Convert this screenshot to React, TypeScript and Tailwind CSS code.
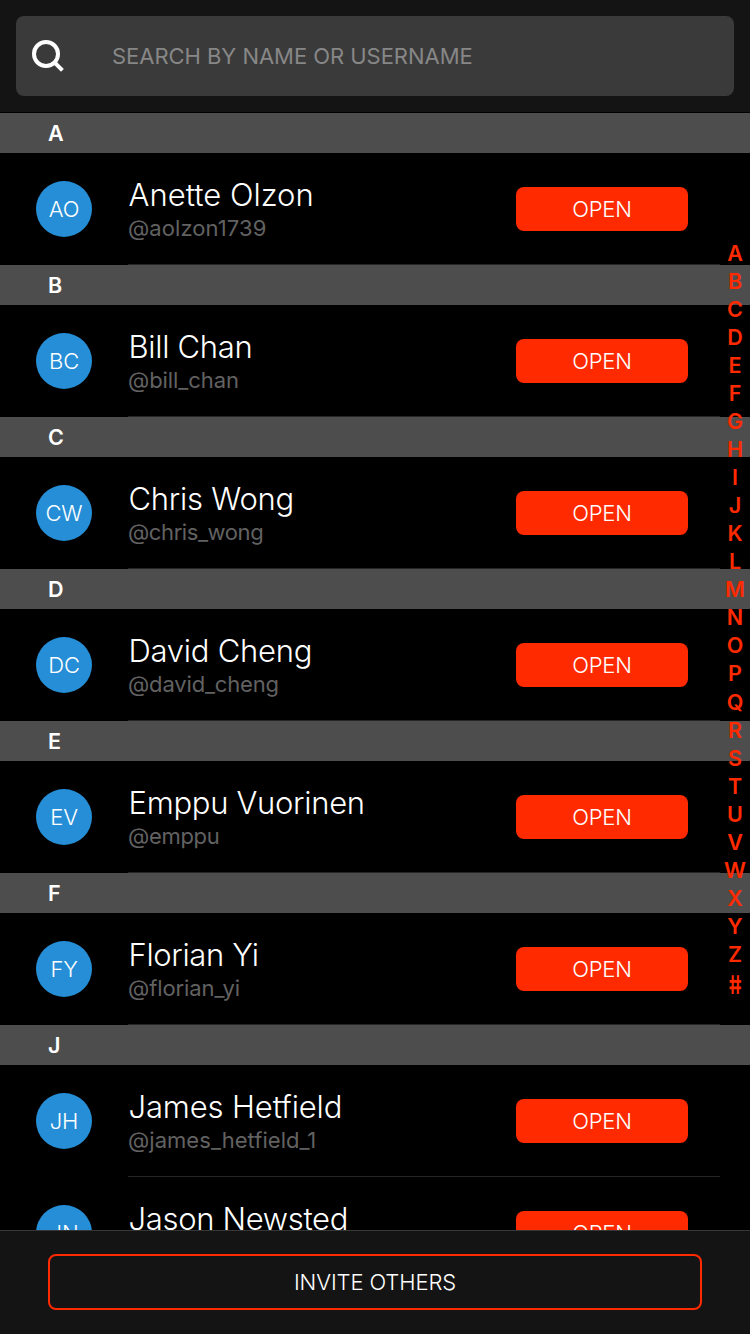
type Contact = {
  name: string;
  username: string;
  initials: string;
  nameTracking: string;
  usernameTracking: string;
};
type Section = { letter: string; contacts: Contact[] };

const sections: Section[] = [
  {
    letter: "A",
    contacts: [
      { name: "Anette Olzon", username: "@aolzon1739", initials: "AO", nameTracking: "tracking-[0.02px]", usernameTracking: "tracking-[0.08px]" },
    ],
  },
  {
    letter: "B",
    contacts: [
      { name: "Bill Chan", username: "@bill_chan", initials: "BC", nameTracking: "tracking-[-0.31px]", usernameTracking: "tracking-[-0.08px]" },
    ],
  },
  {
    letter: "C",
    contacts: [
      { name: "Chris Wong", username: "@chris_wong", initials: "CW", nameTracking: "tracking-[-0.24px]", usernameTracking: "tracking-[-0.4px]" },
    ],
  },
  {
    letter: "D",
    contacts: [
      { name: "David Cheng", username: "@david_cheng", initials: "DC", nameTracking: "tracking-[-0.24px]", usernameTracking: "tracking-[-0.16px]" },
    ],
  },
  {
    letter: "E",
    contacts: [
      { name: "Emppu Vuorinen", username: "@emppu", initials: "EV", nameTracking: "tracking-[-0.3px]", usernameTracking: "tracking-[-0.3px]" },
    ],
  },
  {
    letter: "F",
    contacts: [
      { name: "Florian Yi", username: "@florian_yi", initials: "FY", nameTracking: "tracking-[-0.35px]", usernameTracking: "tracking-[-0.1px]" },
    ],
  },
  {
    letter: "J",
    contacts: [
      { name: "James Hetfield", username: "@james_hetfield_1", initials: "JH", nameTracking: "tracking-[-0.13px]", usernameTracking: "tracking-[0.04px]" },
      { name: "Jason Newsted", username: "@jason_newsted", initials: "JN", nameTracking: "tracking-[-0.32px]", usernameTracking: "tracking-[-0.1px]" },
    ],
  },
];

const indexLetters = "ABCDEFGHIJKLMNOPQRSTUVWXYZ".split("");

function SearchBar() {
  return (
    <header className="h-28 shrink-0 bg-[#141414] p-4">
      <div className="flex h-20 items-center rounded-lg bg-[#3a3a3a] pl-4">
        <svg className="h-8 w-8 shrink-0" viewBox="0 0 32 32" fill="none" stroke="#fff" strokeWidth="4">
          <circle cx="14" cy="14" r="12" />
          <path d="M22.2 22.2 30.4 30.4" />
        </svg>
        <span className="ml-12 text-[22px] leading-7 tracking-[-0.04px] text-[#878787]">
          SEARCH BY NAME OR USERNAME
        </span>
      </div>
    </header>
  );
}

function ContactRow({ contact }: { contact: Contact }) {
  return (
    <li className="flex h-28 shrink-0 pl-9">
      <div className="mt-7 flex h-14 w-14 shrink-0 items-center justify-center rounded-full bg-[#268ed6] text-[22px] font-light tracking-[-0.2px] text-white">
        {contact.initials}
      </div>
      <div className="mr-[30px] ml-9 flex flex-1 justify-between border-b border-[#262626] pr-8">
        <div className="pt-[22px] whitespace-nowrap">
          <div className={`mb-px pl-[0.5px] text-[31px] leading-[39px] font-light text-white ${contact.nameTracking}`}>
            {contact.name}
          </div>
          <div className={`text-[22px] leading-[26px] text-[#626262] ${contact.usernameTracking}`}>{contact.username}</div>
        </div>
        <button className="mt-[34px] h-11 w-[172px] rounded-lg bg-[#ff2a00] text-[22px] font-light tracking-[-0.2px] text-white">
          OPEN
        </button>
      </div>
    </li>
  );
}

export default function App() {
  return (
    <div className="relative flex h-[1334px] w-[750px] flex-col overflow-hidden bg-black font-['Inter','Liberation_Sans',sans-serif] [font-feature-settings:'calt'_0]">
      <SearchBar />
      <main className="min-h-0 flex-1 overflow-hidden pt-px">
        {sections.map((section) => (
          <section key={section.letter}>
            <h2 className="flex h-10 items-center bg-[#4d4d4d] pl-12 text-[21.5px] font-semibold text-white">
              {section.letter}
            </h2>
            <ul>
              {section.contacts.map((contact) => (
                <ContactRow key={contact.username} contact={contact} />
              ))}
            </ul>
          </section>
        ))}
      </main>
      <footer className="h-[104px] shrink-0 border-t border-[#373737] bg-[#141414] px-12 pt-[23px]">
        <button className="h-14 w-full rounded-lg border-2 border-[#ff2a00] text-[22px] font-light tracking-[-0.1px] text-white">
          INVITE OTHERS
        </button>
      </footer>
      <nav className="absolute top-[239px] right-0 flex w-[30px] flex-col text-center text-[21.5px] leading-[28.03px] font-semibold text-[#ff2a00]">
        {indexLetters.map((letter) => (
          <span key={letter}>{letter}</span>
        ))}
        <span className="origin-center translate-y-0.5 scale-x-95 scale-y-[1.2] skew-x-[9deg]">#</span>
      </nav>
    </div>
  );
}
